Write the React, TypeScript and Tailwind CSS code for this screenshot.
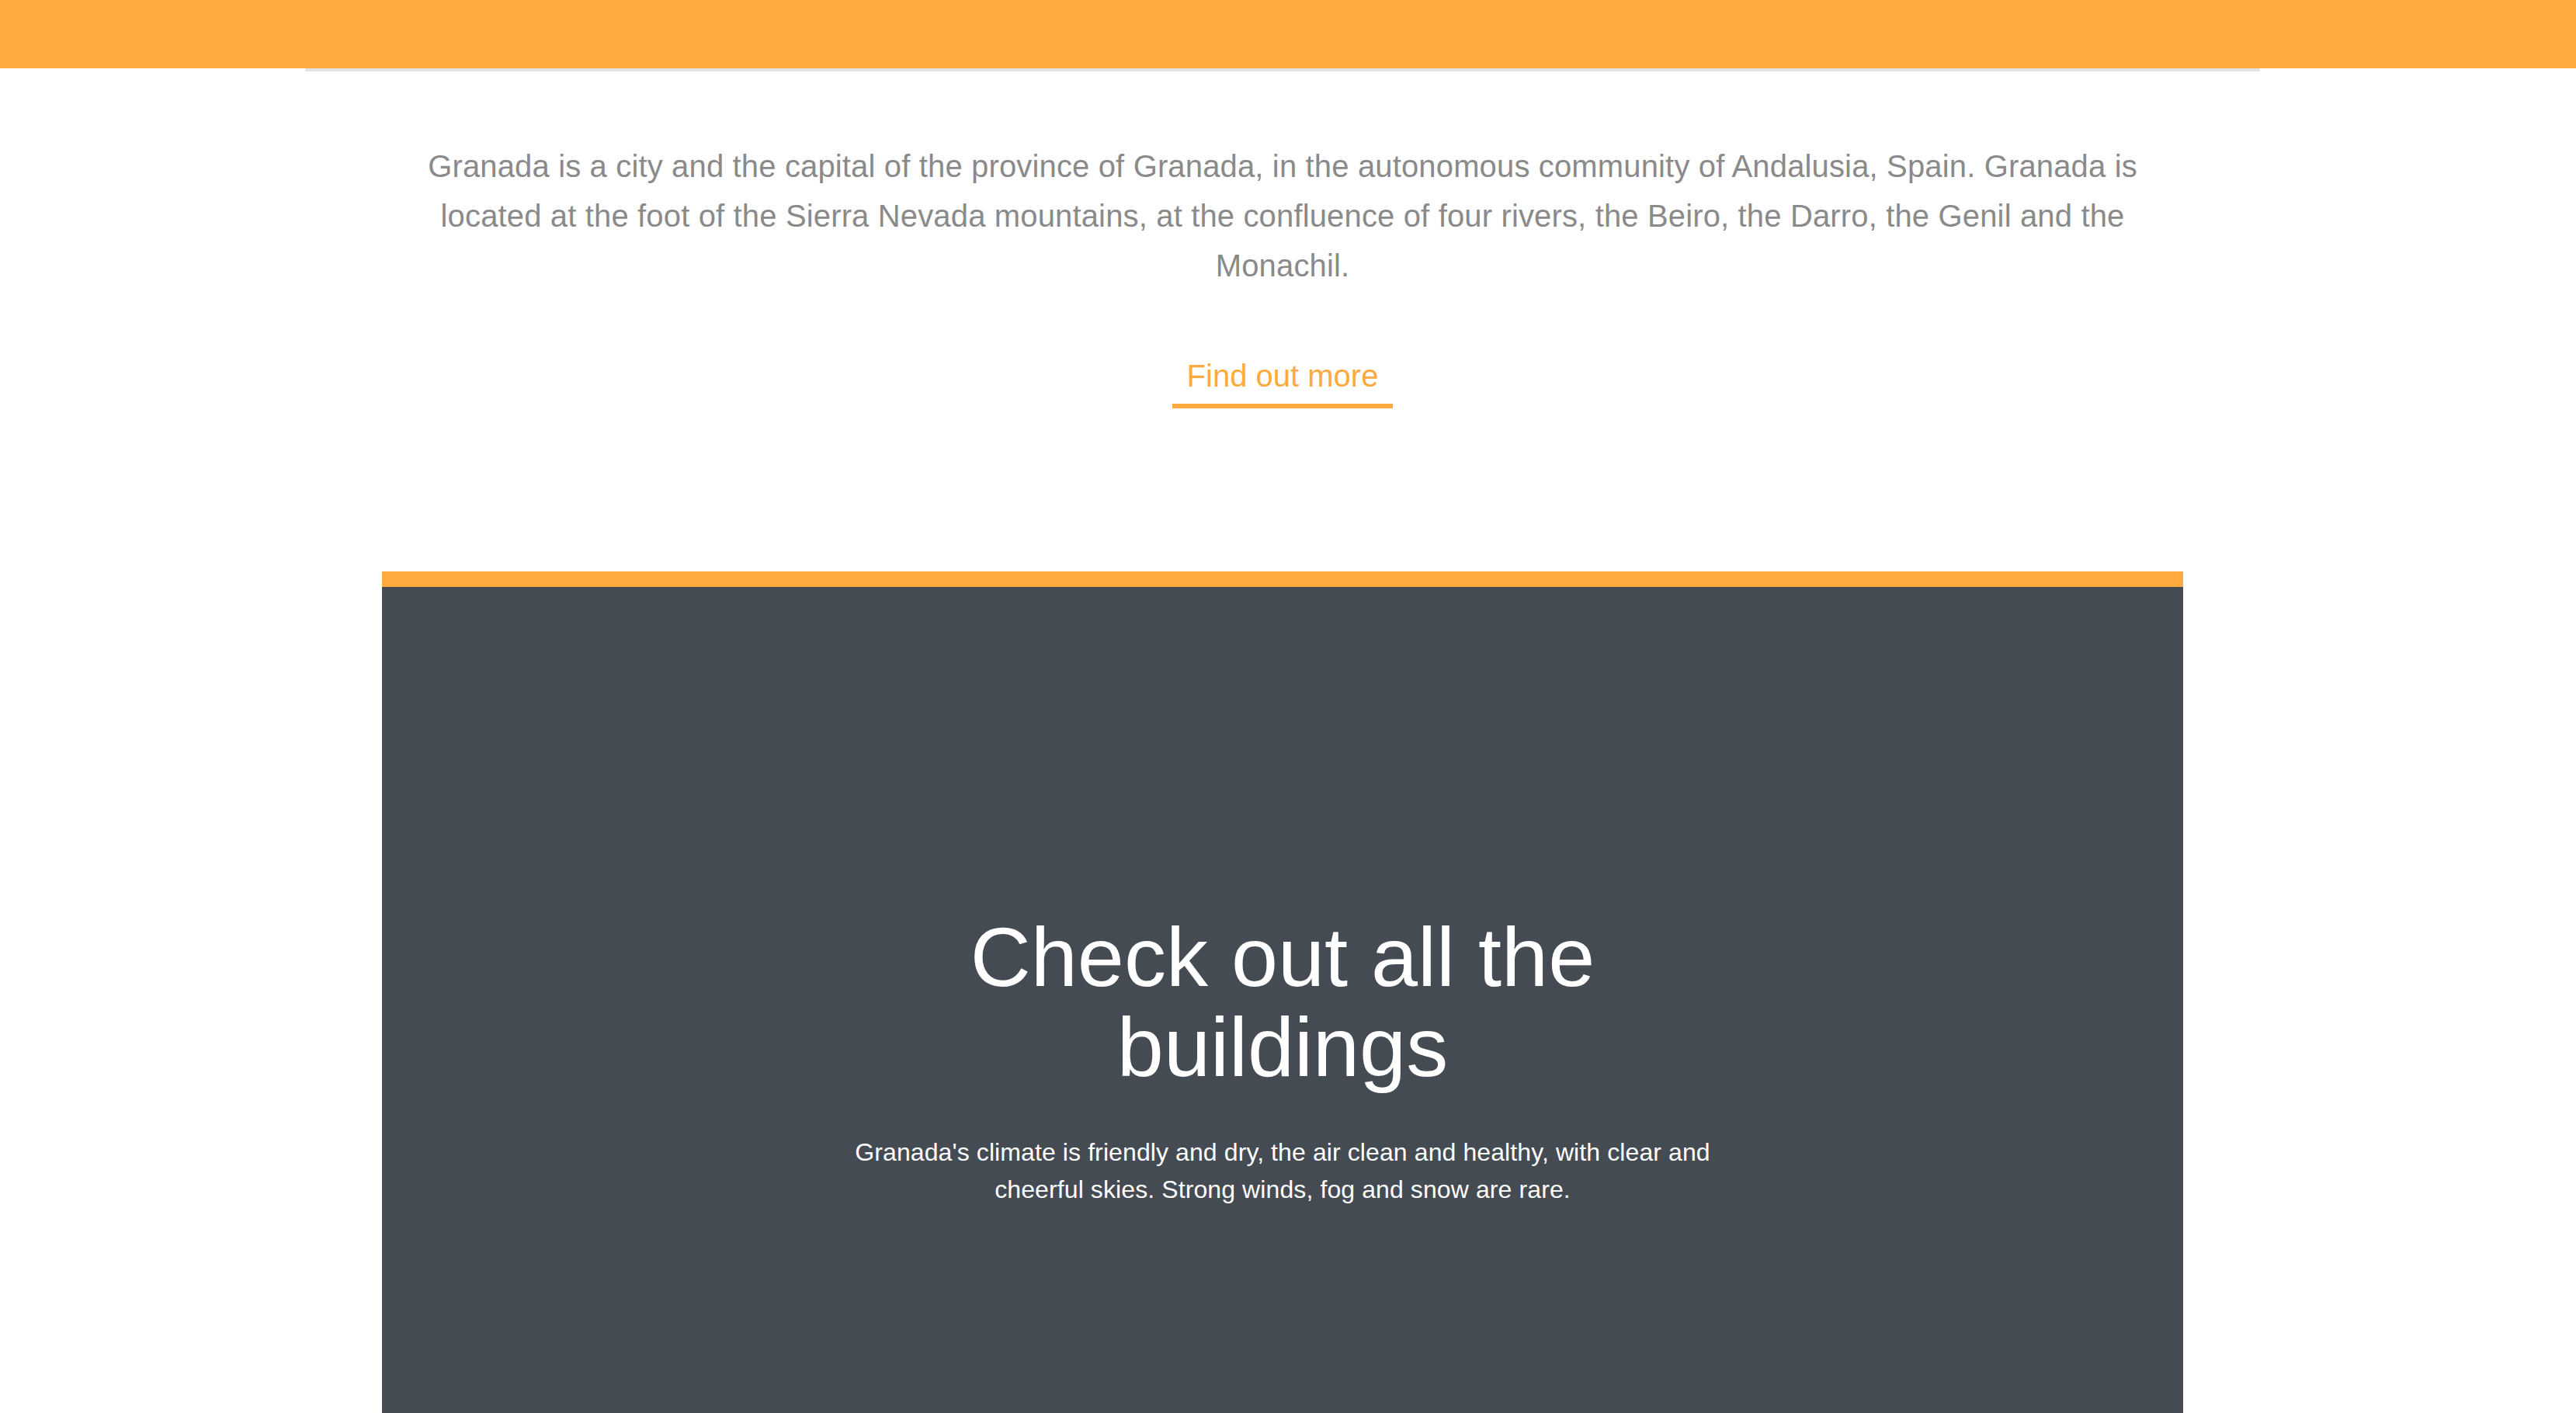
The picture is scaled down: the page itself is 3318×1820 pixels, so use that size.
import React from 'react';

const font = { fontFamily: '"Liberation Sans", Arial, Helvetica, sans-serif' };

function TopBar() {
  return (
    <header className="w-full">
      <div className="h-[88px] w-full bg-[#ffaa3e]" />
      <div className="pr-[14px]">
        <div className="mx-auto h-[4px] w-[2518px] bg-[#e1e3e5]" />
      </div>
    </header>
  );
}

function Intro() {
  return (
    <section className="flex flex-col items-center pt-[90px]">
      <p className="mx-auto max-w-[2290px] text-center text-[40px] leading-[64px] tracking-[0.15px] text-[#8a8a8a]">
        Granada is a city and the capital of the province of Granada, in the autonomous community of
        Andalusia, Spain. Granada is located at the foot of the Sierra Nevada mountains, at the
        confluence of four rivers, the Beiro, the Darro, the Genil and the Monachil.
      </p>
      <a
        href="#"
        className="mt-[87px] inline-block border-b-[6px] border-[#ffaa3e] px-[19px] pb-[13px] text-[40px] leading-[46px] text-[#ffaa3e]"
      >
        Find out more
      </a>
    </section>
  );
}

function Buildings() {
  return (
    <section className="mx-auto mt-[210px] w-[2320px] border-t-[20px] border-[#ffaa3e] bg-[#454b53] pb-[400px] pt-[419px]">
      <div className="mx-auto flex max-w-[1150px] flex-col items-center text-center text-white">
        <h2 className="text-[108px] font-normal leading-[116px]">Check out all the buildings</h2>
        <p className="mt-[53px] text-[32px] leading-[48px] tracking-[0.1px]">
          Granada's climate is friendly and dry, the air clean and healthy, with clear and cheerful
          skies. Strong winds, fog and snow are rare.
        </p>
      </div>
    </section>
  );
}

export default function App() {
  return (
    <div className="min-h-screen w-full overflow-hidden bg-white" style={font}>
      <TopBar />
      <main className="pr-[14px]">
        <Intro />
        <Buildings />
      </main>
    </div>
  );
}
